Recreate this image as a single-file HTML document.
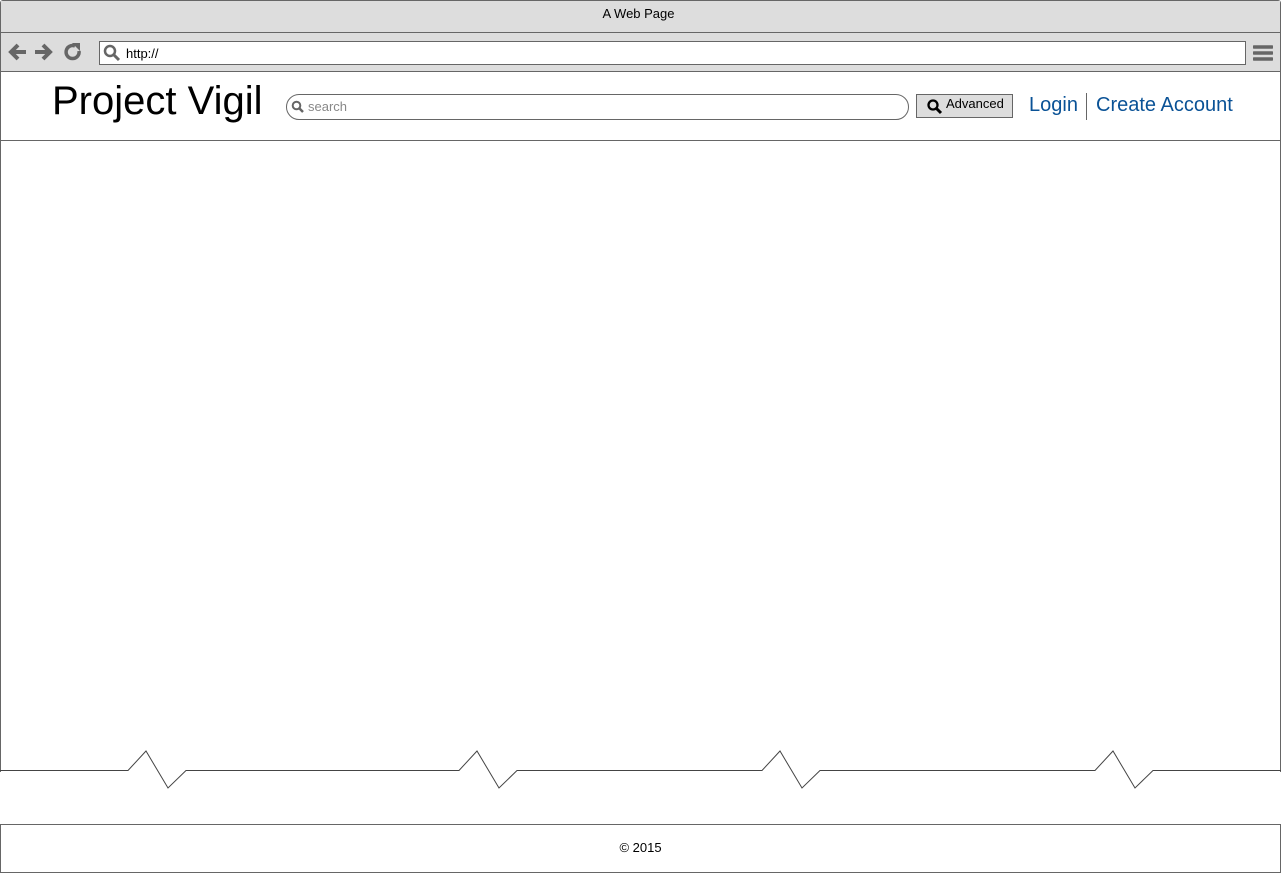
<!DOCTYPE html>
<html><head><style>
body{margin:0;width:1281px;height:873px;position:relative;background:#fff;font-family:"Liberation Sans",sans-serif;overflow:hidden}
.a{position:absolute}
</style></head><body>
<div class="a" style="left:0;top:0;width:1279px;height:771px;border:1px solid #666;border-bottom:none;border-radius:3px 3px 0 0;background:#fff"></div>
<div class="a" style="left:1px;top:1px;width:1279px;height:31px;background:#ddd;border-bottom:1px solid #666"></div>
<div class="a" style="left:-2px;top:6px;width:1281px;text-align:center;font-size:13px">A Web Page</div>
<div class="a" style="left:1px;top:33px;width:1279px;height:38px;background:#ddd;border-bottom:1px solid #666"></div>
<svg class="a" style="left:8px;top:42px" width="76" height="20">
<path d="M3 10 H18 M10 3 L3 10 L10 17" stroke="#666" stroke-width="4" fill="none"/>
<path d="M27 10 H42 M35 3 L42 10 L35 17" stroke="#666" stroke-width="4" fill="none"/>
<path d="M71 9 A6.5 6.5 0 1 1 67 4" stroke="#666" stroke-width="3.5" fill="none"/><path d="M64 1 L72 1 L72 9 Z" fill="#666"/>
</svg>
<div class="a" style="left:99px;top:41px;width:1145px;height:22px;border:1px solid #666;background:#fff"></div>
<svg class="a" style="left:103px;top:44px" width="18" height="18"><circle cx="7" cy="7" r="5" stroke="#666" stroke-width="2.5" fill="none"/><path d="M10.5 10.5 L16 16" stroke="#666" stroke-width="3"/></svg>
<div class="a" style="left:126px;top:46px;font-size:13px">http://</div>
<svg class="a" style="left:1253px;top:44px" width="20" height="18"><path d="M1 3H19M1 9H19M1 15H19" stroke="#666" stroke-width="3.5" stroke-linecap="round"/></svg>
<div class="a" style="left:1px;top:140px;width:1279px;border-top:1px solid #666"></div>
<div class="a" style="left:52px;top:79px;font-size:40px;color:#000">Project Vigil</div>
<div class="a" style="left:286px;top:94px;width:621px;height:24px;border:1px solid #666;border-radius:13px"></div>
<svg class="a" style="left:291px;top:100px" width="14" height="14"><circle cx="5.5" cy="5.5" r="3.8" stroke="#666" stroke-width="2" fill="none"/><path d="M8 8 L12 12" stroke="#666" stroke-width="2.5"/></svg>
<div class="a" style="left:308px;top:99px;font-size:13px;color:#888">search</div>
<div class="a" style="left:916px;top:94px;width:95px;height:22px;border:1px solid #666;background:#ddd"></div>
<svg class="a" style="left:927px;top:99px" width="16" height="16"><circle cx="6" cy="6" r="4.5" stroke="#000" stroke-width="2.3" fill="none"/><path d="M9 9 L14 14" stroke="#000" stroke-width="3"/></svg>
<div class="a" style="left:946px;top:96px;font-size:13px">Advanced</div>
<div class="a" style="left:1029px;top:94px;font-size:20px;color:#0a5296">Login</div>
<div class="a" style="left:1086px;top:93px;height:27px;border-left:1px solid #666"></div>
<div class="a" style="left:1096px;top:94px;font-size:20px;color:#0a5296">Create Account</div>
<svg class="a" style="left:0;top:745px" width="1281" height="50"><rect x="2" y="0" width="1277" height="25" fill="#fff"/>
<path d="M0 25.5 H128 L146 6 L168 43 L186 25.5 H459 L477 6 L499 43 L517 25.5 H762 L780 6 L802 43 L820 25.5 H1095 L1113 6 L1135 43 L1153 25.5 H1281" stroke="#444" stroke-width="1" fill="none"/></svg>
<div class="a" style="left:0;top:824px;width:1279px;height:47px;border:1px solid #666"></div>
<div class="a" style="left:0;top:840px;width:1281px;text-align:center;font-size:13px">© 2015</div>
</body></html>
